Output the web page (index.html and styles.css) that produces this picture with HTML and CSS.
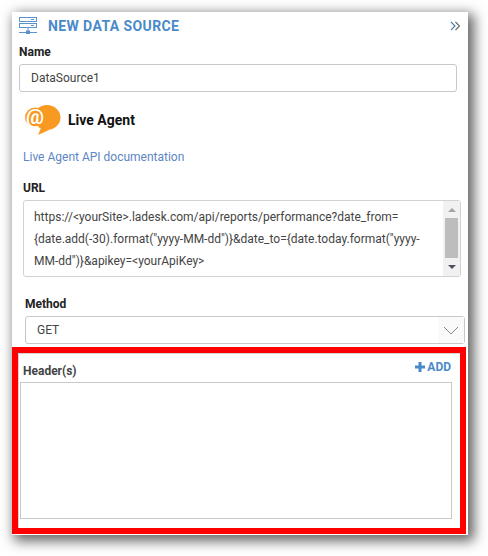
FILE: index.html
```html
<!DOCTYPE html>
<html lang="en">
  <head>
    <meta charset="UTF-8" />
    <title>New Data Source</title>
    <link rel="stylesheet" href="styles.css">
  </head>
  <body>
    <div class="panel">
      <div class="panel-head">
        <svg class="head-icon" width="18" height="18" viewBox="0 0 18 18" fill="none" stroke="#5b93cf" stroke-width="1">
          <rect x="0.5" y="0.5" width="17" height="4"/>
          <rect x="0.5" y="6.500" width="17" height="4"/>
          <path d="M12 2.500h3M12 8.500h3M9 11v3M0 15.500h18"/>
          <rect x="7" y="13.500" width="4" height="3.500" fill="#5b93cf" stroke="none"/>
        </svg>
        <span class="head-title">NEW DATA SOURCE</span>
        <svg class="head-collapse" width="11" height="10" viewBox="0 0 11 10" fill="none" stroke-width="1.100">
          <path d="M1 1l4 4-4 4" stroke="#4a7aa8"/>
          <path d="M5.500 1l4 4-4 4" stroke="#666"/>
        </svg>
      </div>

      <label class="field-label name-label">Name</label>
      <div class="input name-input">DataSource1</div>

      <div class="brand">
        <svg width="36" height="30" viewBox="0 0 36 30">
          <ellipse cx="22" cy="12.500" rx="13.500" ry="12.500" fill="#f89a21"/>
          <circle cx="10" cy="12.500" r="10" fill="#f89a21"/>
          <path d="M16 23l-3 7 11-5z" fill="#f89a21"/>
          <text x="10" y="19" font-family="Roboto" font-size="20" font-weight="700" fill="#fff" text-anchor="middle">@</text>
        </svg>
        <span class="brand-name">Live Agent</span>
      </div>

      <a class="doc-link">Live Agent API documentation</a>

      <label class="field-label url-label">URL</label>
      <div class="url-box">
        <div class="url-text">https://&lt;yourSite&gt;.ladesk.com/api/reports/performance?date_from=<br>{date.add(-30).format("yyyy-MM-dd")}&amp;date_to={date.today.format("yyyy-<br>MM-dd")}&amp;apikey=&lt;yourApiKey&gt;</div>
        <div class="scrollbar">
          <span class="arrow-up"></span>
          <span class="thumb"></span>
          <span class="arrow-down"></span>
        </div>
      </div>

      <label class="field-label method-label">Method</label>
      <div class="select">
        <span class="select-value">GET</span>
        <span class="select-btn">
          <svg width="16" height="9" viewBox="0 0 16 9" fill="none" stroke="#888" stroke-width="1">
            <path d="M1 1l7 7 7-7"/>
          </svg>
        </span>
      </div>

      <div class="headers">
        <div class="headers-top">
          <label class="field-label headers-label">Header(s)</label>
          <span class="add-btn">
            <svg width="10" height="10" viewBox="0 0 10 10" fill="#4a8ac9">
              <path d="M3.500 0h3v3.500H10v3H6.500V10h-3V6.500H0v-3h3.500z"/>
            </svg>
            ADD
          </span>
        </div>
        <div class="headers-box"></div>
      </div>
    </div>
  </body>
</html>
```

FILE: styles.css
```css
*,
*::before,
*::after {
  box-sizing: border-box;
}
body {
  margin: 0;
  padding: 12px 0 0 12px;
  background: #fff;
  height: 556px;
  overflow: hidden;
  font-family: Roboto, "Liberation Sans", sans-serif;
  color: #444;
}

.panel {
  width: 456px;
  height: 523px;
  background: #fff;
  box-shadow: 4px 4px 12px 2px rgba(0, 0, 0, 0.62);
}

.panel-head {
  display: flex;
  align-items: center;
  height: 28px;
  padding: 0 7px 0 7px;
}
.head-title {
  margin-left: 11px;
  font-size: 14px;
  font-weight: 700;
  letter-spacing: 0.4px;
  color: #4a8ac9;
}
.head-collapse {
  margin-left: auto;
}

.field-label {
  display: block;
  font-size: 12px;
  font-weight: 700;
  line-height: 14px;
  color: #222;
}
.name-label {
  margin: 5px 0 0 7px;
}

.input {
  width: 438px;
  height: 28px;
  margin: 5px 0 0 7px;
  padding-left: 11px;
  border: 1px solid #c8c8c8;
  border-radius: 3px;
  font-size: 12px;
  line-height: 26px;
}

.brand {
  display: flex;
  align-items: center;
  margin: 13px 0 0 13px;
  height: 30px;
}
.brand-name {
  margin-left: 7px;
  font-size: 14px;
  font-weight: 700;
  color: #111;
}

.doc-link {
  display: block;
  margin: 15px 0 0 11px;
  font-size: 12px;
  line-height: 14px;
  color: #5c86c4;
}

.url-label {
  margin: 17px 0 0 11px;
}
.url-box {
  display: flex;
  width: 438px;
  height: 77px;
  margin: 5px 0 0 11px;
  border: 1px solid #d2d2d2;
  border-radius: 3px;
}
.url-text {
  flex: 1;
  padding: 5px 0 0 10px;
  font-size: 12px;
  line-height: 22px;
  white-space: nowrap;
}

.scrollbar {
  display: flex;
  flex-direction: column;
  align-items: center;
  width: 17px;
  background: #f1f1f1;
}
.arrow-up {
  margin-top: 7px;
  border: 4px solid transparent;
  border-top: 0;
  border-bottom: 4px solid #a3a3a3;
}
.thumb {
  width: 13px;
  height: 40px;
  margin-top: 6px;
  background: #bdbdbd;
}
.arrow-down {
  margin-top: 7px;
  border: 4px solid transparent;
  border-bottom: 0;
  border-top: 4px solid #50505c;
}

.method-label {
  margin: 20px 0 0 13px;
}
.select {
  display: flex;
  justify-content: space-between;
  width: 440px;
  height: 28px;
  margin: 5px 0 0 13px;
  border: 1px solid #c8c8c8;
  border-radius: 3px;
  font-size: 12px;
  line-height: 26px;
}
.select-value {
  padding-left: 11px;
}
.select-btn {
  display: flex;
  align-items: center;
  justify-content: center;
  width: 26px;
  background: #fafafa;
}

.headers {
  width: 454px;
  height: 187px;
  margin-top: 3px;
  border: 6px solid #f00;
  box-shadow: inset 1px 1px 0 #d5d5d5;
}
.headers-top {
  display: flex;
  justify-content: space-between;
  align-items: flex-start;
  height: 29px;
  padding: 6px 9px 0 5px;
}
.headers-label {
  margin-top: 5px;
  color: #444;
}
.add-btn {
  display: flex;
  align-items: center;
  gap: 2px;
  font-size: 12px;
  font-weight: 700;
  line-height: 16px;
  color: #4a8ac9;
}
.headers-box {
  width: 432px;
  height: 137px;
  margin-left: 2px;
  border: 1px solid #c8c8c8;
}
```
